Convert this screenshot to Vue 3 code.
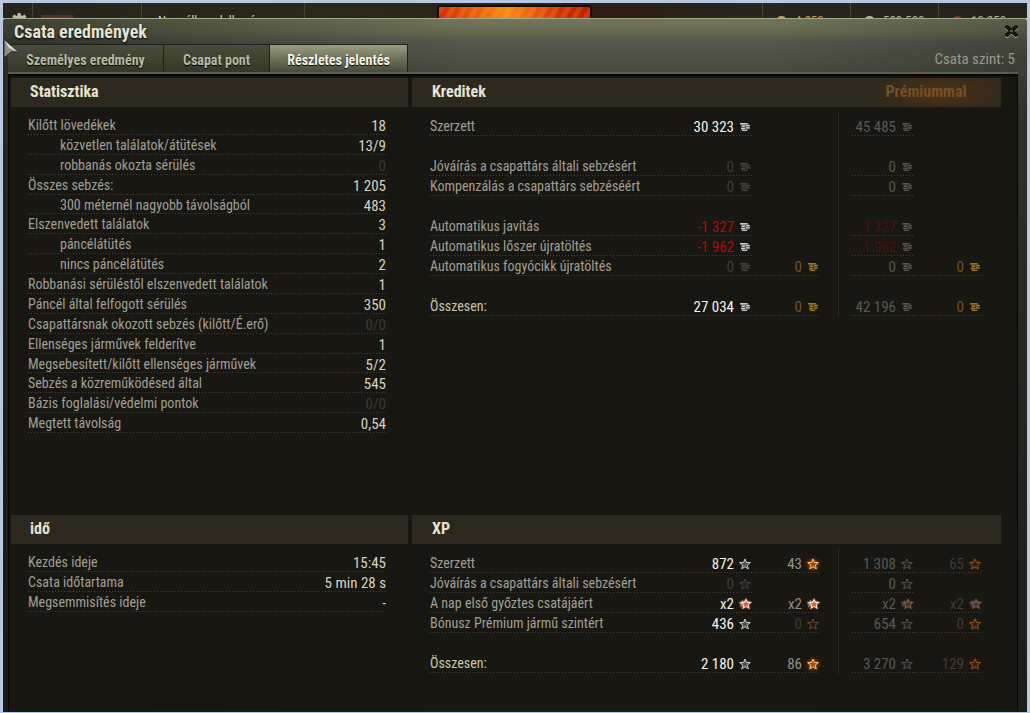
<script setup>
const tabs = [
  { label: 'Személyes eredmény', active: false },
  { label: 'Csapat pont', active: false },
  { label: 'Részletes jelentés', active: true }
]

const stats = [
  ['Kilőtt lövedékek', '18'],
  ['közvetlen találatok/átütések', '13/9', 'sub'],
  ['robbanás okozta sérülés', '0', 'sub nil'],
  ['Összes sebzés:', '1 205'],
  ['300 méternél nagyobb távolságból', '483', 'sub'],
  ['Elszenvedett találatok', '3'],
  ['páncélátütés', '1', 'sub'],
  ['nincs páncélátütés', '2', 'sub'],
  ['Robbanási sérüléstől elszenvedett találatok', '1'],
  ['Páncél által felfogott sérülés', '350'],
  ['Csapattársnak okozott sebzés (kilőtt/É.erő)', '0/0', 'nil'],
  ['Ellenséges járművek felderítve', '1'],
  ['Megsebesített/kilőtt ellenséges járművek', '5/2'],
  ['Sebzés a közreműködésed által', '545'],
  ['Bázis foglalási/védelmi pontok', '0/0', 'nil'],
  ['Megtett távolság', '0,54']
]

const times = [
  ['Kezdés ideje', '15:45'],
  ['Csata időtartama', '5 min 28 s'],
  ['Megsemmisítés ideje', '-']
]

/* Each cell: [text, tone, icon, icon tone] */
const credits = [
  { label: 'Szerzett', cells: [['30 323', 'on', 'coin', 'silver'], null, ['45 485', 'dim', 'coin', 'grey'], null] },
  { gap: true },
  { label: 'Jóváírás a csapattárs általi sebzésért', cells: [['0', 'off', 'coin', 'faint'], null, ['0', 'dim', 'coin', 'grey'], null] },
  { label: 'Kompenzálás a csapattárs sebzéséért', cells: [['0', 'off', 'coin', 'faint'], null, ['0', 'dim', 'coin', 'grey'], null] },
  { gap: true },
  { label: 'Automatikus javítás', cells: [['-1 327', 'red', 'coin', 'silver'], null, ['-1 327', 'darkred', 'coin', 'grey'], null] },
  { label: 'Automatikus lőszer újratöltés', cells: [['-1 962', 'red', 'coin', 'silver'], null, ['-1 962', 'darkred', 'coin', 'grey'], null] },
  { label: 'Automatikus fogyócikk újratöltés', cells: [['0', 'off', 'coin', 'faint'], ['0', 'gold', 'coin', 'golden'], ['0', 'dim', 'coin', 'grey'], ['0', 'gold', 'coin', 'golden']] },
  { gap: true },
  { label: 'Összesen:', total: true, cells: [['27 034', 'on', 'coin', 'silver'], ['0', 'gold', 'coin', 'golden'], ['42 196', 'dim', 'coin', 'grey'], ['0', 'gold', 'coin', 'golden']] }
]

const xp = [
  { label: 'Szerzett', cells: [['872', 'on', 'star', 'silver'], ['43', 'mid', 'star', 'fire'], ['1 308', 'dim', 'star', 'grey'], ['65', 'off', 'star', 'rust']] },
  { label: 'Jóváírás a csapattárs általi sebzésért', cells: [['0', 'off', 'star', 'faint'], null, ['0', 'dim', 'star', 'grey'], null] },
  { label: 'A nap első győztes csatájáért', cells: [['x2', 'on', 'double', 'bright'], ['x2', 'mid', 'double', 'bright'], ['x2', 'dim', 'double', 'bright low'], ['x2', 'off', 'double', 'bright low']] },
  { label: 'Bónusz Prémium jármű szintért', cells: [['436', 'on', 'star', 'silver'], ['0', 'off', 'star', 'brown'], ['654', 'dim', 'star', 'grey'], ['0', 'off', 'star', 'rust']] },
  { gap: true },
  { label: 'Összesen:', total: true, cells: [['2 180', 'on', 'star', 'silver'], ['86', 'mid', 'star', 'fire'], ['3 270', 'dim', 'star', 'grey'], ['129', 'off', 'star', 'rust']] }
]

const ledgers = { credits, xp }
</script>

<template>
  <div class="screen">
    <svg class="defs" width="0" height="0" aria-hidden="true">
      <symbol id="coin" viewBox="0 0 14 12">
        <path d="M3 2h6l2 1.500v4L9 10H4L3 8z" fill="currentColor" opacity=".4" />
        <path d="M2 2h6v1.500H2zM4 4.500h3V6H4zM8 4h4v1.300H8zM3 7h4v1.300H3zM8 6.300h4v1.300H8zM4 9h5v1H4zM8 2.300h2v1H8z" fill="currentColor" />
      </symbol>
      <symbol id="star" viewBox="0 0 14 12">
        <path class="star-shape" d="M7 1l1.400 3.400 4 .2-3.100 2.500 1 3.800L7 8.800l-3.300 2.100 1-3.800-3.100-2.500 4-.2z" />
      </symbol>
      <symbol id="double" viewBox="0 0 14 12">
        <path d="M4.500 1.500l1 2.600 3 .3-2.300 2 .8 3.100-2.500-1.700L2 9.500l.8-3.100L.5 4.400l3-.3z" fill="#9a948c" />
        <path d="M8 .2l1.700 3.400 4.300.4-3.200 2.800 1 4.400L8 9l-3.800 2.200 1-4.400L2 4l4.300-.4z" fill="#ffe3d2" />
        <path d="M8 2.800l1 2.200 2.500.2-1.900 1.600.6 2.500L8 8l-2.200 1.300.6-2.500-1.900-1.600L7 5z" fill="#dc5a34" />
      </symbol>
    </svg>

    <header class="lobby">
      <div class="slot gear">
        <svg width="16" height="16" viewBox="0 0 16 16" aria-hidden="true">
          <path d="M6.500 0h3l.4 2.200 1.500.7 2-1.300 2 2-1.300 2 .7 1.500L16 7.500v2L6 16 0 9.500v-2l1.900-.4.7-1.500-1.300-2 2-2 2 1.300 1.300-.7z" fill="#c2bda2" />
        </svg>
      </div>
      <div class="slot server"><i class="flag"></i></div>
      <div class="slot name">Nem áll rendelkezésre</div>
      <div class="slot centre"><span class="battle"></span></div>
      <div class="slot res amber"><i></i>4 250</div>
      <div class="slot res pale"><i></i>580 500</div>
      <div class="slot res ruby"><i></i>10 250</div>
    </header>

    <main class="window">
      <svg class="cursor" width="17" height="20" viewBox="0 0 17 20" aria-hidden="true">
        <path d="M1 1l14 12-7 0-7 6z" fill="#8d8e88" stroke="#24251f" />
        <path d="M1 1l14 12-9-4z" fill="#d9dad5" />
      </svg>
      <div class="titlebar">
        <h1>Csata eredmények</h1>
        <button class="close" type="button" aria-label="Bezárás">
          <svg width="15" height="15" viewBox="0 0 15 15" aria-hidden="true">
            <path d="M3 4l9 8M12 4l-9 8" stroke="#a3a58c" stroke-width="4" stroke-linecap="round" />
            <path d="M3 3l9 8M12 3l-9 8" stroke="#14150f" stroke-width="4" stroke-linecap="round" />
            <path d="M6 6l3 2M9 6l-3 2" stroke="#6b6350" stroke-width="1" />
          </svg>
        </button>
      </div>
      <div class="tabbar">
        <nav class="tabs">
          <button v-for="t in tabs" :key="t.label" type="button" :class="{ active: t.active }">{{ t.label }}</button>
        </nav>
        <span class="level">Csata szint: 5</span>
      </div>

      <div class="body">
        <section class="upper">
          <h2>Statisztika</h2>
          <table class="pairs tall">
            <tbody>
              <tr v-for="r in stats" :key="r[0]" :class="r[2]">
                <th scope="row">{{ r[0] }}</th>
                <td>{{ r[1] }}</td>
              </tr>
            </tbody>
          </table>
        </section>

        <section v-for="(rows, key) in ledgers" :key="key" :class="key">
          <h2>
            <span>{{ key === 'credits' ? 'Kreditek' : 'XP' }}</span>
            <span v-if="key === 'credits'" class="premium">Prémiummal</span>
          </h2>
          <div class="ledger">
            <i class="rule"></i>
            <template v-for="(r, i) in rows" :key="i">
              <div v-if="r.gap" class="gap"></div>
              <div v-else class="row" :class="{ total: r.total }">
                <span class="half main" :class="{ wide: r.cells[1] }">
                  <span class="lab">{{ r.label }}</span>
                  <span v-for="(c, j) in r.cells.slice(0, 2)" :key="j" class="cell" :class="[c ? c[1] : 'none', j ? 'second' : 'first']">
                    <template v-if="c">{{ c[0] }}<svg width="14" height="12" :class="'ico ' + c[3]" aria-hidden="true"><use :href="'#' + c[2]" /></svg></template>
                  </span>
                </span>
                <span class="half prem">
                  <span v-for="(c, j) in r.cells.slice(2)" :key="j" class="cell" :class="[c ? c[1] : 'none', j ? 'second' : 'first']">
                    <template v-if="c">{{ c[0] }}<svg width="14" height="12" :class="'ico ' + c[3]" aria-hidden="true"><use :href="'#' + c[2]" /></svg></template>
                  </span>
                </span>
              </div>
            </template>
          </div>
        </section>

        <section class="time">
          <h2>idő</h2>
          <table class="pairs short">
            <tbody>
              <tr v-for="r in times" :key="r[0]">
                <th scope="row">{{ r[0] }}</th>
                <td>{{ r[1] }}</td>
              </tr>
            </tbody>
          </table>
        </section>
      </div>
    </main>
  </div>
</template>

<style>
body { margin: 0; background: #b7c9e2; }
</style>

<style scoped>
.screen {
  box-sizing: border-box;
  min-height: 100vh;
  padding: 3px 3px 1px 3px;
  display: flex;
  flex-direction: column;
  background: #b7c9e2;
  font-family: "Roboto Condensed", "Liberation Sans Narrow", "Open Sans Condensed", "Liberation Sans", sans-serif;
  font-size: 15px;
  color: #a19f92;
}
.defs { position: absolute; }
.lobby {
  height: 15px;
  display: flex;
  overflow: hidden;
  background: linear-gradient(90deg, #25241d, #2b281b 35%, #301d19 60%, #26251e 72%, #25231b);
}
.slot { border-right: 1px solid #45433a; box-sizing: border-box; white-space: nowrap; }
.gear { width: 30px; padding: 10px 0 0 8px; }
.server { width: 109px; padding: 12px 0 0 8px; }
.flag { display: block; width: 32px; height: 4px; background: #59302b; }
.name { width: 163px; padding: 10px 0 0 16px; font-size: 13px; line-height: 16px; color: #d8d4bc; }
.centre { flex: 1; padding-left: 132px; }
.battle {
  display: block;
  width: 151px;
  height: 14px;
  margin-top: 2px;
  border: 2px solid #160b06;
  border-radius: 3px;
  background: repeating-linear-gradient(120deg, #ffae2433 0 5px, transparent 5px 10px), linear-gradient(90deg, #d12c08, #f98a1b 45%, #d43008 80%, #b91f05);
}
.res { width: 88px; display: flex; align-items: flex-start; padding: 10px 0 0 14px; font-size: 13px; line-height: 16px; }
.res i { width: 9px; height: 8px; margin: 3px 9px 0 0; border-radius: 4px; background: currentColor; }
.amber { color: #c99c4e; }
.pale { color: #b9b5a4; }
.ruby { color: #b9b090; border: 0; }
.ruby i { background: #a02c1c; }

.window {
  position: relative;
  flex: 1;
  display: flex;
  flex-direction: column;
  padding: 0 9px 1px 5px;
  border-top: 1px solid #a4a78a;
  border-radius: 3px 3px 0 0;
  background:
    linear-gradient(90deg, #12140f88 0, transparent 45%, transparent 75%, #12140f44),
    linear-gradient(180deg, #73765b 0, #686b52 12px, #53564a 24px, #484a3d 54px, #3a3c31 90px, #2a2c24 400px, #1f201b);
}
.cursor { position: absolute; left: 0; top: 20px; }
.titlebar { height: 25px; display: flex; justify-content: space-between; align-items: center; padding-left: 6px; }
h1, h2 { margin: 0; font-weight: bold; }
h1 { font-size: 18px; line-height: 24px; color: #e6e3d2; text-shadow: 0 1px 2px #000; }
button { font: inherit; padding: 0; border: 0; background: none; }
.close { width: 15px; height: 15px; margin-right: -1px; }
.close svg { display: block; }
.tabbar { height: 28px; display: flex; justify-content: space-between; border-bottom: 2px solid #5b5c50; }
.tabs { display: flex; }
.tabs button {
  height: 28px;
  padding-top: 3px;
  border: 1px solid #1f2119;
  border-width: 1px 1px 0 0;
  font-size: 14px;
  font-weight: bold;
  color: #bab8a6;
  text-shadow: 0 1px 1px #000;
  background: linear-gradient(#4a4d3c, #353829);
  width: 106px;
}
.tabs button:first-child { width: 156px; }
.tabs .active { width: 138px; color: #f6f4e8; background: linear-gradient(#9a9d80, #6f725b 50%, #484b3c); }
.level { font-size: 15px; line-height: 31px; color: #99998b; padding-right: 3px; }

.body {
  flex: 1;
  display: grid;
  grid-template-columns: 397fr 589fr;
  grid-template-rows: 437px 1fr;
  column-gap: 4px;
  padding: 4px 17px 0 3px;
  background: #191712;
  box-shadow: inset 0 2px 2px #050504, inset 1px 0 0 #080807, inset -1px 0 0 #080807;
}
.time { grid-area: 2 / 1; }
h2 {
  display: flex;
  justify-content: space-between;
  height: 29px;
  padding-left: 19px;
  font-size: 16px;
  line-height: 28px;
  color: #e6e3d2;
  background: #2d291e;
}
.credits h2, .xp h2 { padding-left: 20px; }
.premium {
  width: 150px;
  text-align: center;
  color: #755027;
  background: radial-gradient(ellipse 70px 26px at 60% 50%, #4b3213, transparent);
}
.pairs {
  width: calc(100% - 39px);
  margin: 8px 0 0 17px;
  border-collapse: collapse;
}
.tall { height: 318px; }
.short tr { height: 20px; }
.pairs th, .pairs td { padding: 1px 0 0; line-height: 18px; vertical-align: top; }
.pairs th { font-size: 14px; font-weight: normal; text-align: left; }
.pairs td { text-align: right; color: #d6d3bf; position: relative; top: 1px; }
.pairs tr, .half, .prem .cell {
  background: repeating-linear-gradient(90deg, #413f36 0 1px, transparent 1px 3px) left bottom / 100% 1px no-repeat;
}
.sub th { padding-left: 32px; }
.nil td { color: #3c3a32; }

.ledger { position: relative; margin-left: 18px; padding-top: 9px; }
.rule { position: absolute; left: 408px; top: 4px; bottom: -1px; width: 1px; background: #2d2b24; }
.row, .gap { height: 20px; }
.row { display: flex; }
.half { display: flex; box-sizing: border-box; height: 20px; line-height: 20px; }
.main { width: 322px; margin-right: 100px; }
.wide { width: 390px; margin-right: 32px; }
.lab { flex: 1; font-size: 14px; }
.half.prem { background: none; }
.cell { display: flex; justify-content: flex-end; align-items: center; width: 68px; height: 20px; line-height: 18px; padding-top: 2px; box-sizing: border-box; white-space: nowrap; }
.main .none { display: none; }
.prem .first { width: 62px; }
.prem .none { background: none; }
.ico { margin-left: 4px; flex: none; overflow: visible; --inner: #55554f; }
.star-shape { fill: var(--inner); stroke: currentColor; stroke-width: 1px; }
.total .lab { color: #c9c5aa; }
.on { color: #f4f3ec; }
.mid { color: #94928a; }
.dim { color: #5a5953; }
.off { color: #3f3d36; }
.red { color: #c00400; }
.darkred { color: #4c0f09; }
.gold { color: #735426; }
.silver { color: #c9c9c6; }
.grey { color: #55544f; --inner: #24231f; }
.faint { color: #44433d; --inner: #24231f; }
.golden { color: #a0762a; }
.fire { color: #ffc27a; --inner: #b3480a; filter: drop-shadow(0 0 2px #d9650c); }
.rust { color: #86512a; --inner: #3c1c08; filter: drop-shadow(0 0 1px #5c2a0a); }
.brown { color: #6a4c30; --inner: #2a1a0e; }
.bright { filter: drop-shadow(0 0 1px #a8502e); }
.low { opacity: .35; }
</style>
